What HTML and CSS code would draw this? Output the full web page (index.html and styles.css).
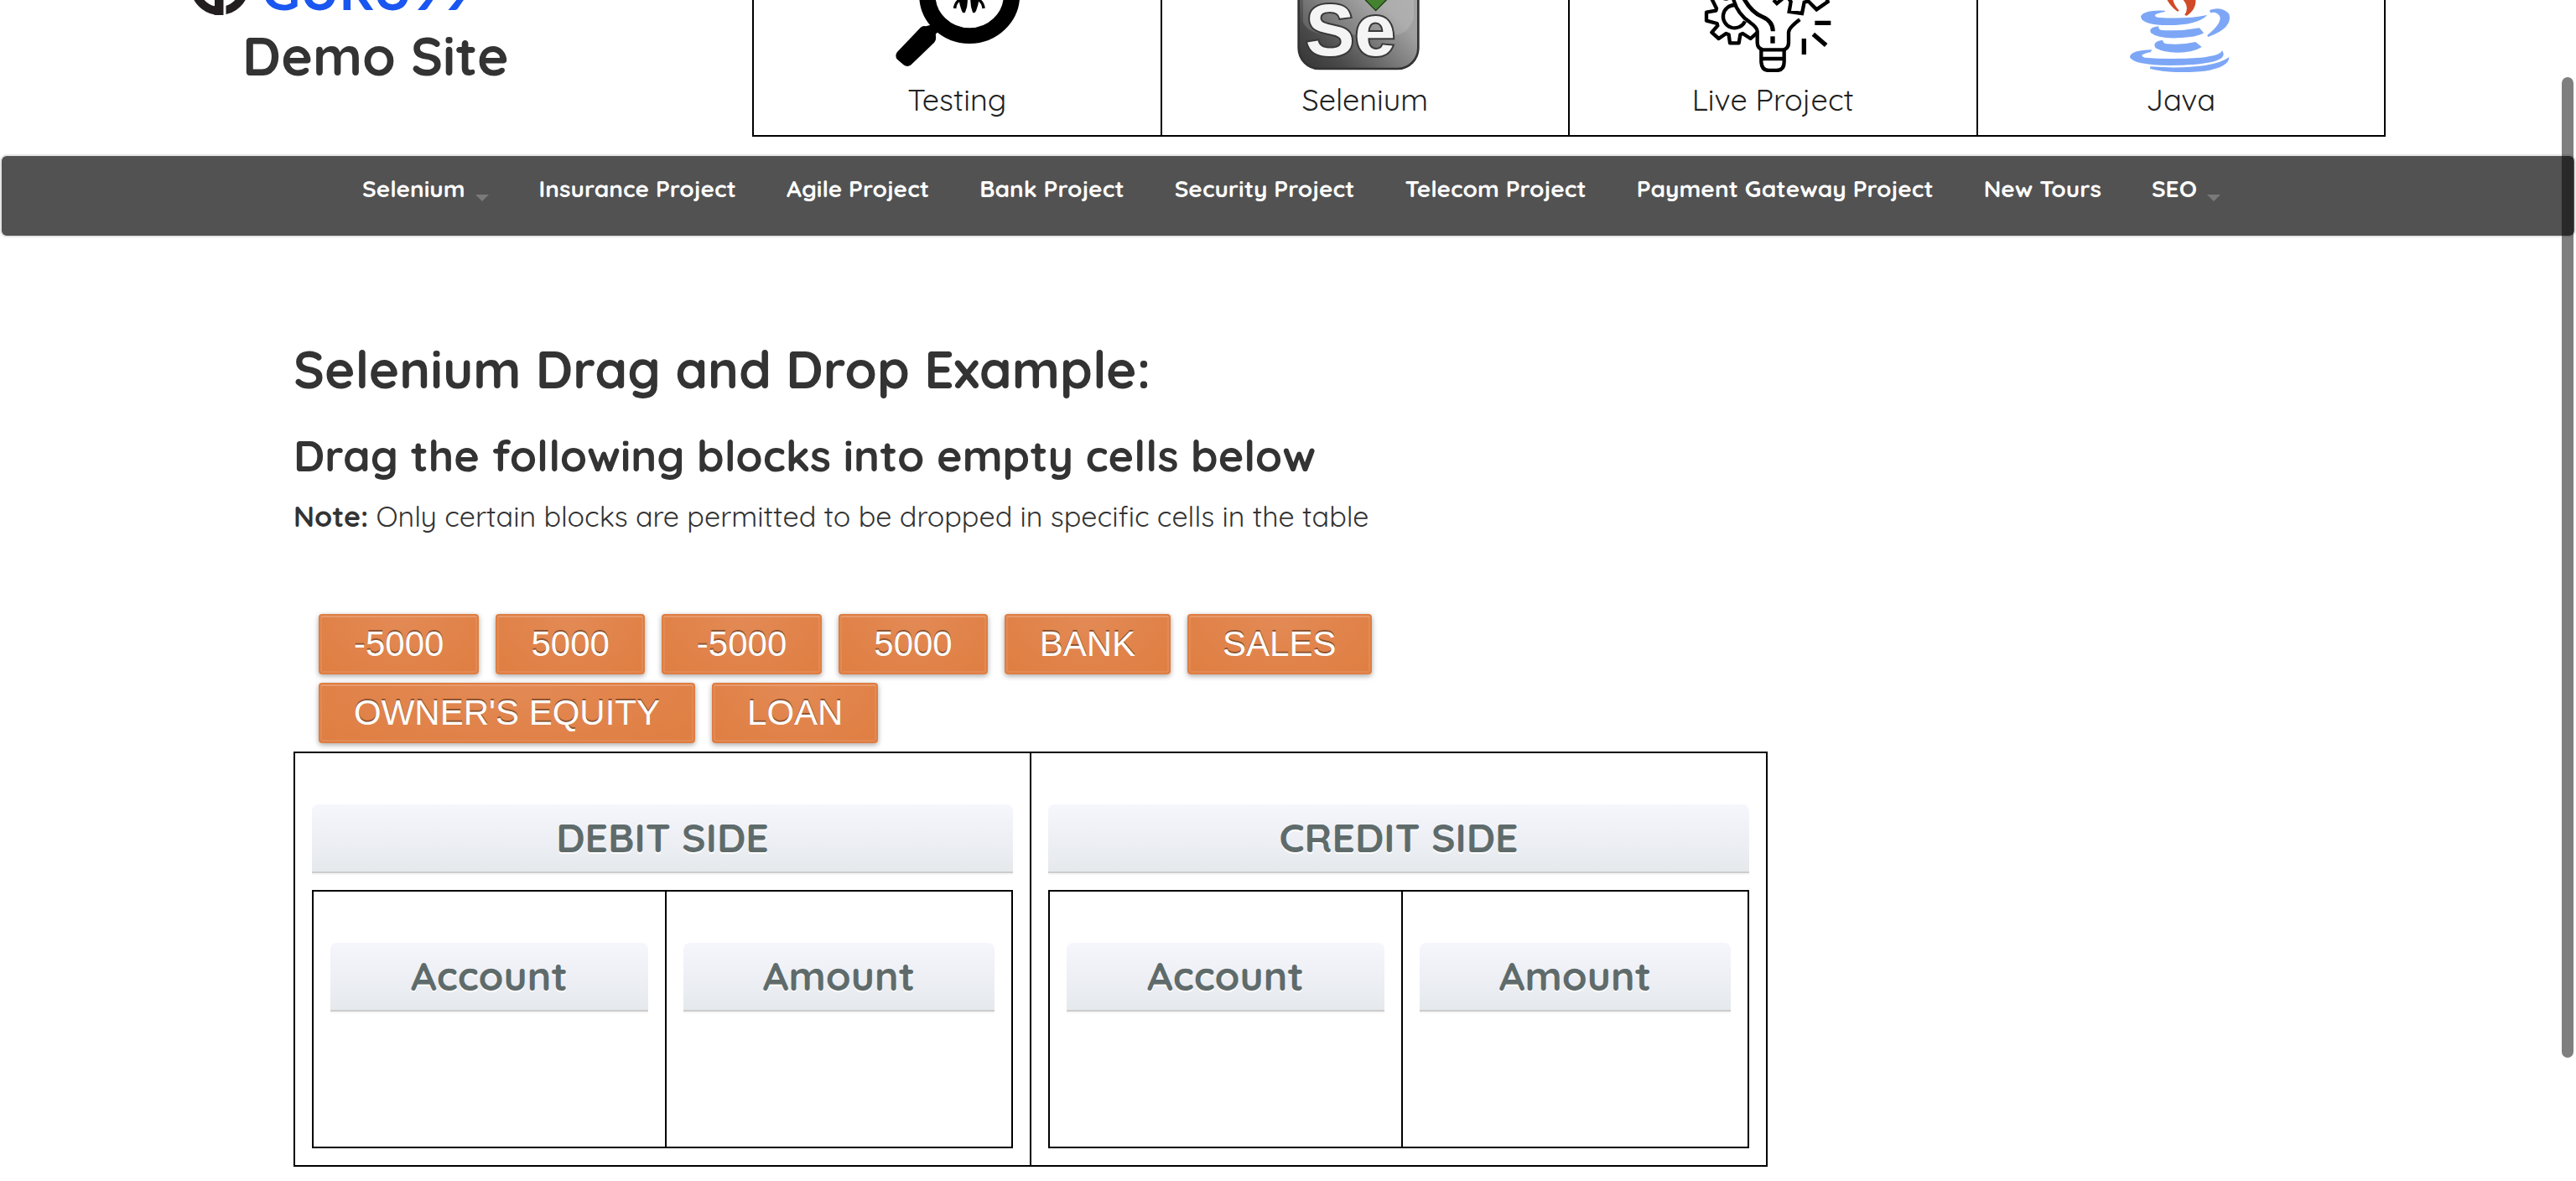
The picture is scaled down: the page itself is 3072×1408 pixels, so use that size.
FILE: index.html
```html
<!DOCTYPE html>
<html lang="en">
<head>
<meta charset="utf-8">
<title>Guru99 Demo Site</title>
<link rel="stylesheet" href="styles.css">
</head>
<body>
<header class="header">
  <div class="brand">
    <svg class="brand-logo" viewBox="0 0 360 20" role="img" aria-label="Guru99">
      <circle cx="33" cy="-17" r="30" fill="none" stroke="#231f20" stroke-width="10"/>
      <path d="M15 4 27 10V-2h11v20H28L15 12z" fill="#231f20"/>
      <path d="M16 -1H27V7Z" fill="#fff"/>
      <path d="M39 -2V20" stroke="#fff" stroke-width="3"/>
      <text class="brand-name" x="83" y="12">GURU99</text>
    </svg>
    <h2 class="brand-title">Demo Site</h2>
  </div>
  <nav class="topics">
    <a class="topic" href="#testing">
      <svg class="topic-icon" viewBox="494 0 522 258" preserveAspectRatio="none" aria-hidden="true">
        <ellipse cx="799" cy="-18" rx="146" ry="146" fill="none" stroke="#000" stroke-width="56"/>
        <path d="M630 98q8-8 18-4l14-4 10-10 24 28-14 14 1 14q0 10-6 16l-80 80q-13 10-26 0l-22-20q-10-12 0-26z"/>
        <path d="M748 30q2-20 16-30M848 30q-2-20-16-30" fill="none" stroke="#000" stroke-width="10"/>
        <path d="M762-4h30q2 26-8 48-8 6-12-6-8-20-10-42zM802-4h30q-2 22-10 42-6 12-12 6-8-20-8-48z"/>
      </svg>
      <span>Testing</span>
    </a>
    <a class="topic" href="#selenium">
      <svg class="topic-icon" viewBox="414 0 540 258" aria-hidden="true">
        <defs>
          <linearGradient id="tile" x1="0" y1="1" x2="1" y2="0">
            <stop offset="0" stop-color="#333"/><stop offset=".2" stop-color="#4a4a4a"/><stop offset=".62" stop-color="#a0a0a0"/><stop offset="1" stop-color="#a8a8a8"/>
          </linearGradient>
        </defs>
        <rect x="446" y="-190" width="428" height="436" rx="74" fill="url(#tile)" stroke="#333" stroke-width="8"/>
        <path d="M462-10V80q20 40 90 44h250q40-10 56-60V-10z" fill="#fff" opacity=".14"/>
        <path d="M680-5 722 38 765-5z" fill="#448230" stroke="#1c3a12" stroke-width="4"/>
        <text class="tile-text" x="470" y="198">Se</text>
      </svg>
      <span>Selenium</span>
    </a>
    <a class="topic" href="#live-project">
      <svg class="topic-icon" viewBox="493 0 540 258" aria-hidden="true">
        <g fill="none" stroke="#000" stroke-width="13" stroke-linejoin="round">
          <path d="M545-4 562 30 560 38 526 44V74L564 84 566 92 545 116 570 138 596 120 606 124 610 154H642L647 124 656 120 684 138 706 118"/>
          <path d="M586-6Q602-2 604-8"/>
          <path d="M628 18A41 41 0 1 0 664 76"/>
          <path d="M622-5Q636 50 682 80 708 98 708 112V152Q708 172 728 178H802Q820 172 820 152V116Q820 100 860 70"/>
          <path d="M660-5Q688 45 726 60 764 76 764 112" stroke-width="15"/>
          <path d="M763 130V155" stroke-width="16"/>
          <path d="M722 180V222Q724 252 750 252H776Q804 252 804 222V180M722 210H804"/>
          <path d="M766 0 778 12 798-4M820-6 828 6 822 42 868 48 876 8 890 4 920 34 960 6 956-8" stroke-linejoin="miter"/>
          <path d="M914 82H971M908 122 954 162M875 138V195" stroke-width="16"/>
        </g>
      </svg>
      <span>Live Project</span>
    </a>
    <a class="topic" href="#java">
      <svg class="topic-icon" viewBox="366 0 386 258" preserveAspectRatio="none" aria-hidden="true">
        <g fill="#d14a27">
          <path d="M522-4H538Q540 16 554 38L550 41Q532 24 522-4z"/>
          <path d="M562-4H596Q600 30 574 56L568 54Q582 24 562-4z"/>
        </g>
        <g fill="#7da7f6">
          <path d="M518 38Q466 34 456 58 456 86 510 90 600 94 626 54 570 70 498 62 480 52 518 42z"/>
          <path d="M502 94Q474 98 482 118 500 138 548 136 600 134 617 118L606 100Q560 112 510 108 500 106 502 94z"/>
          <path d="M510 144Q484 150 494 172 514 188 550 188 590 188 612 168L596 150Q560 162 518 156 512 152 512 144z"/>
          <path d="M632 36Q664 20 682 50 692 100 628 132L626 126Q664 84 658 58 650 40 634 46z"/>
          <path d="M484 178Q430 180 428 204 436 232 530 234 690 232 664 180 662 198 610 206 530 214 466 206 446 196 482 186z"/>
          <path d="M480 238Q560 246 620 234 664 224 682 204 682 240 620 254 540 266 480 246z"/>
        </g>
      </svg>
      <span>Java</span>
    </a>
  </nav>
</header>

<nav class="menu">
  <ul class="menu-list">
    <li><a class="menu-link has-submenu" href="#m-selenium">Selenium</a></li>
    <li><a class="menu-link" href="#insurance">Insurance Project</a></li>
    <li><a class="menu-link" href="#agile">Agile Project</a></li>
    <li><a class="menu-link" href="#bank">Bank Project</a></li>
    <li><a class="menu-link" href="#security">Security Project</a></li>
    <li><a class="menu-link" href="#telecom">Telecom Project</a></li>
    <li><a class="menu-link" href="#payment">Payment Gateway Project</a></li>
    <li><a class="menu-link" href="#tours">New Tours</a></li>
    <li><a class="menu-link has-submenu" href="#seo">SEO</a></li>
  </ul>
</nav>

<main class="content">
  <h1 class="title">Selenium Drag and Drop Example:</h1>
  <h2 class="subtitle">Drag the following blocks into empty cells below</h2>
  <p class="note"><strong>Note:</strong> Only certain blocks are permitted to be dropped in specific cells in the table</p>

  <div class="blocks">
    <button class="block" type="button" draggable="true">-5000</button>
    <button class="block" type="button" draggable="true">5000</button>
    <button class="block" type="button" draggable="true">-5000</button>
    <button class="block" type="button" draggable="true">5000</button>
    <button class="block" type="button" draggable="true">BANK</button>
    <button class="block" type="button" draggable="true">SALES</button>
    <button class="block" type="button" draggable="true">OWNER'S EQUITY</button>
    <button class="block" type="button" draggable="true">LOAN</button>
  </div>

  <div class="ledger">
    <section class="side">
      <h3 class="bar">DEBIT SIDE</h3>
      <table class="entries">
        <thead><tr><th class="account"><div class="bar">Account</div></th><th><div class="bar">Amount</div></th></tr></thead>
        <tbody><tr><td></td><td></td></tr></tbody>
      </table>
    </section>
    <section class="side">
      <h3 class="bar">CREDIT SIDE</h3>
      <table class="entries">
        <thead><tr><th class="account"><div class="bar">Account</div></th><th><div class="bar">Amount</div></th></tr></thead>
        <tbody><tr><td></td><td></td></tr></tbody>
      </table>
    </section>
  </div>
</main>
<div class="scroll-thumb"></div>
</body>
</html>
```
FILE: styles.css
```css
* { box-sizing: border-box; }

body {
  margin: 0;
  background: #fff;
  color: #333;
  font-family: Quicksand, Lato, "Liberation Sans", sans-serif;
  font-size: 36px;
}

h1, h2, h3, p, ul { margin: 0; padding: 0; }
a { color: inherit; text-decoration: none; }

/* header */
.header {
  display: flex;
  padding: 0 227px 0 229px;
}
.brand { flex: 0 0 668px; }
.brand-logo { display: block; width: 360px; height: 20px; overflow: hidden; }
.brand-name { font-family: Lato, sans-serif; font-weight: 700; font-size: 63px; fill: #1a56f0; }
.brand-title {
  padding-left: 60px;
  margin-top: 6px;
  font-size: 64px;
  line-height: 80px;
  font-weight: 700;
}
.topics {
  flex: 1;
  display: grid;
  grid-template-columns: repeat(4, 1fr);
  gap: 2px;
  background: #000;
  border: 2px solid #000;
  border-top: 0;
}
.topic {
  display: flex;
  flex-direction: column;
  align-items: center;
  gap: 8px;
  height: 161px;
  background: #fff;
  color: #222;
  font-weight: 400;
  font-size: 36px;
  line-height: 50px;
}
.topic-icon { width: 180px; height: 86px; overflow: hidden; }
.tile-text {
  font-family: "Liberation Sans", sans-serif;
  font-weight: 700;
  font-size: 264px;
  fill: #f4f4f4;
  stroke: #383838;
  stroke-width: 12px;
  paint-order: stroke;
}

/* main menu */
.menu {
  margin: 21px 0 0;
  background: #525252;
  border: 2px solid #e6e6e6;
  border-radius: 8px;
  height: 99px;
  padding: 22px 422px 0 430px;
}
.menu-list { display: flex; justify-content: space-between; list-style: none; }
.menu-link {
  display: flex;
  gap: 12px;
  color: #fff;
  font-weight: 700;
  font-size: 28px;
  line-height: 34px;
  white-space: nowrap;
}
.has-submenu::after {
  content: "";
  align-self: flex-end;
  margin-bottom: 2px;
  border: 8px solid transparent;
  border-top-color: #7a7a7a;
  border-bottom: 0;
}

/* content */
.content { padding: 117px 350px 16px; }
.title { font-size: 62px; line-height: 80px; }
.subtitle { margin-top: 30px; font-size: 52px; line-height: 66px; }
.note { margin-top: 18px; font-size: 34px; line-height: 44px; font-weight: 400; }
.note strong { font-weight: 700; }

.blocks {
  display: flex;
  flex-wrap: wrap;
  gap: 10px 20px;
  max-width: 1760px;
  padding: 94px 30px 10px;
}
.block {
  height: 72px;
  padding: 0 40px;
  border: 2px solid #df7d41;
  border-radius: 4px;
  background: radial-gradient(ellipse at 50% 0, #e38a55, #df7e42);
  box-shadow: 0 2px 6px rgba(0, 0, 0, .35), inset 0 2px 0 #e79a6c, inset 0 0 0 2px #e28a55;
  color: #fff;
  font: 42px/64px "Liberation Sans", sans-serif;
  text-shadow: 0 -2px 0 #8f5533;
}

.ledger {
  display: grid;
  grid-template-columns: 1fr 1fr;
  gap: 2px;
  max-width: 1758px;
  background: #000;
  border: 2px solid #000;
}
.side { padding: 61px 20px 20px; background: #fff; }
.bar {
  height: 82px;
  border-bottom: 2px solid #ccc;
  border-radius: 8px 8px 0 0;
  background: linear-gradient(#f6f6fd, #e5e9ec);
  box-shadow: 0 2px 0 #f6f6f6;
  color: #5f6b6b;
  font-size: 48px;
  line-height: 78px;
  font-weight: 700;
  text-align: center;
  text-shadow: 0 2px 0 #fff;
}
.entries {
  width: 100%;
  margin-top: 20px;
  border-collapse: collapse;
  border: 2px solid #000;
  table-layout: fixed;
}
.account { width: 421px; }
.entries th { padding: 61px 20px 0; }
.entries th, .entries td { border-right: 2px solid #000; }
.entries td { height: 162px; padding: 0; }

.scroll-thumb {
  position: fixed;
  top: 92px;
  right: 3px;
  bottom: 147px;
  width: 14px;
  border-radius: 7px;
  background: rgba(0, 0, 0, .5);
}
```
